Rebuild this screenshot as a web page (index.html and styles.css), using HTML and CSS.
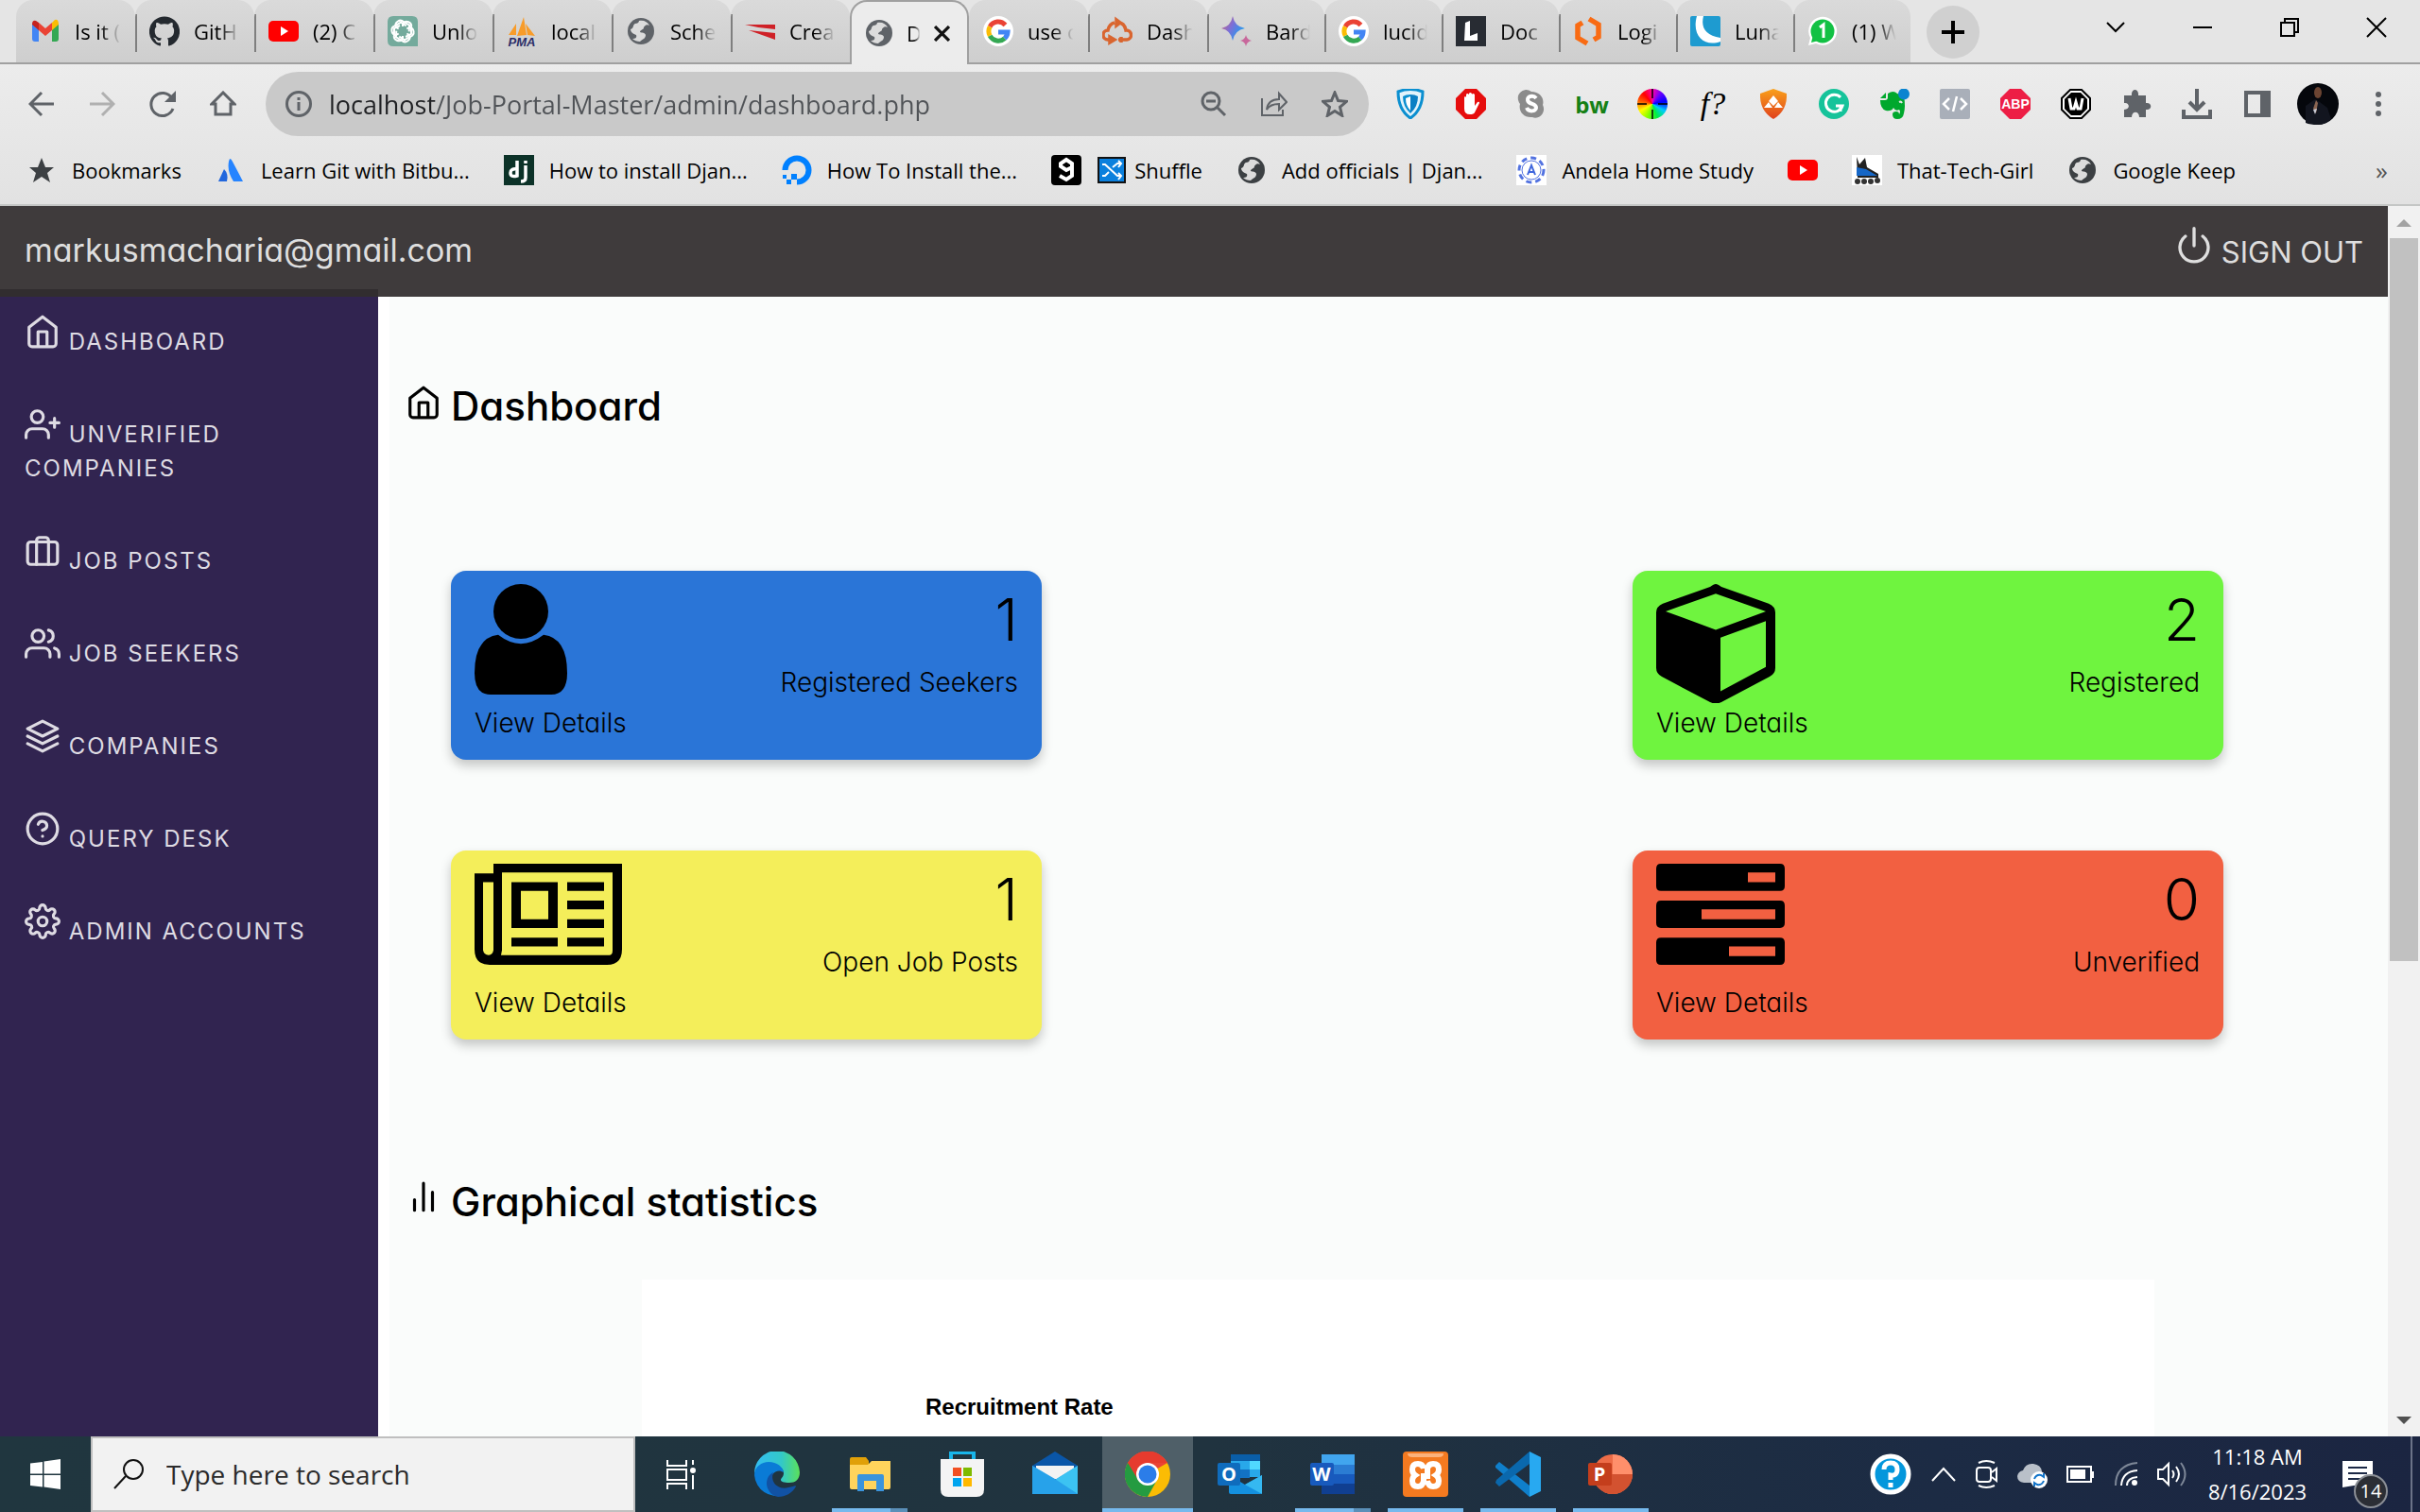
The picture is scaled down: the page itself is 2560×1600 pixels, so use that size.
FILE: index.html
```html
<!DOCTYPE html>
<html lang="en">
<head>
<meta charset="utf-8">
<title>Dashboard</title>
<link rel="stylesheet" href="styles.css">
</head>
<body>
<svg class="sprite" aria-hidden="true">
  <symbol id="globe" viewBox="0 0 32 32"><circle cx="16" cy="16" r="14" fill="currentColor"/><path d="M14 5c5-1 9 1 11 5-3-2-5 0-6 2 0 3-4 2-4 5 2 1 5 0 6 3 0 4-3 4-6 7-3 0-6-1-8-3 3 0 5-1 4-4-3-1-6-3-6-6 4-1 2-5 5-6 2 0 4-1 4-3z" fill="#dcdcdc"/></symbol>
  <symbol id="google" viewBox="0 0 32 32"><circle cx="16" cy="16" r="16" fill="#fff"/><g fill="none" stroke-width="5"><path d="M23.500 9.500A10 10 0 0 0 7.200 11.200" stroke="#ea4335"/><path d="M7.200 11.200a10 10 0 0 0 0 9.600" stroke="#fbbc04"/><path d="M7.200 20.800a10 10 0 0 0 15.600 2.800" stroke="#34a853"/><path d="M22.800 23.600a10 10 0 0 0 3.200-6.600H16" stroke="#4285f4"/></g></symbol>
  <symbol id="youtube" viewBox="0 0 32 32"><rect y="5" width="32" height="22" rx="5" fill="#f00"/><path d="M13 11v10l8-5z" fill="#fff"/></symbol>
  <symbol id="house" viewBox="0 0 24 24"><path d="M3 9l9-7 9 7v11a2 2 0 0 1-2 2H5a2 2 0 0 1-2-2zM9 22V12h6v10"/></symbol>
</svg>

<div class="browser">
  <div class="tabstrip">
    <div class="tabs">
      <button class="tab"><svg viewBox="0 0 32 32"><path d="M2 8v16q0 3 3 3h4V14z" fill="#4285f4"/><path d="M30 8v16q0 3-3 3h-4V14z" fill="#34a853"/><path d="M23 7l3-3q4-1 4 5l-7 6z" fill="#fbbc04"/><path d="M9 7L6 5Q2 4 2 9l7 6z" fill="#c5221f"/><path d="M9 7l7 6 7-6v8l-7 6-7-6z" fill="#ea4335"/></svg><span>Is it (</span></button>
      <button class="tab tab-line"><svg viewBox="0 0 24 24"><path fill="#24292f" d="M12 .3a12 12 0 0 0-3.800 23.400c.6.100.8-.3.800-.6v-2c-3.300.7-4-1.600-4-1.600-.6-1.400-1.400-1.800-1.400-1.800-1-.7.100-.7.100-.7 1.200 0 1.900 1.200 1.900 1.200 1 1.800 2.800 1.300 3.500 1 0-.8.400-1.300.7-1.600-2.700-.3-5.500-1.300-5.500-6 0-1.200.5-2.300 1.300-3.100-.2-.4-.6-1.600 0-3.200 0 0 1-.3 3.400 1.200a11.500 11.500 0 0 1 6 0c2.300-1.500 3.300-1.200 3.300-1.200.6 1.600.2 2.800 0 3.200.9.800 1.300 1.900 1.300 3.200 0 4.600-2.800 5.600-5.500 5.900.5.400.9 1 .9 2.200v3.300c0 .3.100.7.800.6A12 12 0 0 0 12 .3"/></svg><span>GitH</span></button>
      <button class="tab tab-line"><svg><use href="#youtube"/></svg><span>(2) C</span></button>
      <button class="tab tab-line"><svg viewBox="0 0 32 32"><path d="M6 0h20q6 0 6 6v26H6q-6 0-6-6V6q0-6 6-6z" fill="#74aa9c"/><g fill="none" stroke="#fff" stroke-width="2"><path id="knot" d="M16 11V8a5 5 0 0 1 9 4v7l-6 3"/><use href="#knot" transform="rotate(60 16 16)"/><use href="#knot" transform="rotate(120 16 16)"/><use href="#knot" transform="rotate(180 16 16)"/><use href="#knot" transform="rotate(240 16 16)"/><use href="#knot" transform="rotate(300 16 16)"/></g></svg><span>Unlo</span></button>
      <button class="tab tab-line"><svg viewBox="0 0 32 32"><path d="M2 20L10 8v12zM11 21L18 1l3 19zM22 20l-2-12 10 13z" fill="#f89c2a"/><text x="16" y="32" text-anchor="middle" class="pma">PMA</text></svg><span>local</span></button>
      <button class="tab tab-line"><svg class="grey"><use href="#globe"/></svg><span>Sche</span></button>
      <button class="tab tab-line"><svg viewBox="0 0 32 32"><path d="M0 9h32v5L14 12zM4 15l28 3v7z" fill="#cf2127"/></svg><span>Crea</span></button>
      <button class="tab tab-active"><svg class="grey"><use href="#globe"/></svg><span>D</span><svg class="tab-close" viewBox="0 0 16 16"><path d="M1 1l14 14M15 1L1 15" stroke="#111" stroke-width="3"/></svg></button>
      <button class="tab"><svg><use href="#google"/></svg><span>use c</span></button>
      <button class="tab tab-line"><svg viewBox="0 0 32 32" fill="none" stroke="#d9652f" stroke-width="3.500"><path d="M8 25H6a5 5 0 0 1 0-10c1-5 3-7 7-8M17 7c5 0 7 3 8 8a5 5 0 0 1 1 10h-9M8 22v6l5-3zM15 4v6l4-3zM20 22v6"/></svg><span>Dash</span></button>
      <button class="tab tab-narrow tab-line"><svg viewBox="0 0 32 32"><defs><linearGradient id="bard" x2="1" y2=".6"><stop stop-color="#d96570"/><stop offset=".5" stop-color="#7b6fd8"/><stop offset="1" stop-color="#1ba1f0"/></linearGradient></defs><path d="M12 0q2 11 13 13-11 2-13 13Q10 15 0 13 10 11 12 0z" fill="url(#bard)"/><path d="M26 20q1 5 6 6-5 1-6 6-1-5-6-6 5-1 6-6z" fill="#c8679b"/></svg><span>Bard</span></button>
      <button class="tab tab-narrow tab-line"><svg><use href="#google"/></svg><span>lucid</span></button>
      <button class="tab tab-narrow tab-line"><svg viewBox="0 0 32 32"><rect width="32" height="32" fill="#282c33"/><path d="M10 7l5-2v16l8-3v8H9z" fill="#fff"/></svg><span>Doc</span></button>
      <button class="tab tab-narrow tab-line"><svg viewBox="0 0 32 32" fill="none" stroke="#f96b13" stroke-width="5.500"><path d="M17 3l10 6v13l-5 3M15 29L5 23V10l5-3"/></svg><span>Logi</span></button>
      <button class="tab tab-narrow tab-line"><svg viewBox="0 0 32 32"><rect width="32" height="32" rx="2" fill="#1e9bd0"/><path d="M7 0h7c-3 12 2 20 18 23v4C16 33 1 22 7 0z" fill="#fff"/></svg><span>Luna</span></button>
      <button class="tab tab-narrow tab-line"><svg viewBox="0 0 32 32"><path d="M1 31l2-8A15 15 0 1 1 9 29z" fill="#fff"/><circle cx="16" cy="16" r="12.500" fill="#12c144"/><path d="M4 28l2-8 6 6z" fill="#12c144"/><path d="M13 12l4-3v14" fill="none" stroke="#fff" stroke-width="3"/></svg><span>(1) W</span></button>
    </div>
    <button class="new-tab" aria-label="New tab"><svg viewBox="0 0 24 24"><path d="M12 0v24M0 12h24" stroke="#000" stroke-width="4"/></svg></button>
    <div class="window-buttons">
      <button aria-label="Search tabs"><svg viewBox="0 0 20 20"><path d="M1 5l9 9 9-9"/></svg></button>
      <button aria-label="Minimize"><svg viewBox="0 0 20 20"><path d="M0 10h20"/></svg></button>
      <button aria-label="Restore"><svg viewBox="0 0 20 20"><path d="M1 5h14v14H1zM5 5V1h14v14h-4"/></svg></button>
      <button aria-label="Close"><svg viewBox="0 0 20 20"><path d="M0 0l20 20M20 0L0 20"/></svg></button>
    </div>
  </div>

  <div class="toolbar">
    <div class="cells line-icons">
      <button aria-label="Back"><svg viewBox="0 0 28 28"><path d="M27 14H3M14 2L2 14l12 12"/></svg></button>
      <button aria-label="Forward" class="dim"><svg viewBox="0 0 28 28"><path d="M1 14h24M14 2l12 12-12 12"/></svg></button>
      <button aria-label="Reload"><svg viewBox="0 0 28 28"><path d="M25 19a12 12 0 1 1-1-11"/><path d="M28 0v12H16z" fill="currentColor" stroke="none"/></svg></button>
      <button aria-label="Home"><svg viewBox="0 0 28 28"><path d="M2 14L14 2l12 12h-4v11H6V14z"/></svg></button>
    </div>
    <div class="address line-icons">
      <svg viewBox="0 0 28 28"><circle cx="14" cy="14" r="12.500"/><path d="M14 12v9M14 7v3"/></svg>
      <input class="url" type="text" aria-label="Address" value="localhost/Job-Portal-Master/admin/dashboard.php">
      <div class="cells">
        <button aria-label="Zoom"><svg viewBox="0 0 28 28"><circle cx="11" cy="11" r="9"/><path d="M18 18l8 8M6 11h10"/></svg></button>
        <button aria-label="Share"><svg class="thin" viewBox="0 0 28 28"><path d="M1 8v18h22v-6M6 20c1-8 6-11 13-11V3l8 9-8 8v-6c-6 0-10 1-13 6z"/></svg></button>
        <button aria-label="Bookmark this tab"><svg viewBox="0 0 28 28"><path d="M14 2l3.500 8.500 9 .8-7 6 2.200 9L14 21.500 6.300 26.300l2.200-9-7-6 9-.8z"/></svg></button>
      </div>
    </div>
    <div class="cells ext">
      <button aria-label="VPN"><svg viewBox="0 0 32 32"><path d="M3 3q13-5 26 0 0 19-13 28Q3 22 3 3z" fill="#e3f3fb" stroke="#0b8fd0" stroke-width="3"/><path d="M16 6q5 0 8 2 0 11-8 18z" fill="#0b7fc4"/><path d="M16 6q-5 0-8 2 0 11 8 18z" fill="#0b8fd0"/><path d="M16 8v15q-5-5-5-13z" fill="#fff"/></svg></button>
      <button aria-label="Ad blocker"><svg viewBox="0 0 32 32"><path d="M10 0h12l10 10v12L22 32H10L0 22V10z" fill="#e60d0d"/><path d="M9 17V9q1-2 2 0v6V6q1-2 3 0v8V5q1-2 3 0v9V6q1-2 3 0v12l3-4q2-1 2 1l-5 10q-1 2-5 2-6 0-6-6z" fill="#fff"/></svg></button>
      <button aria-label="Skype"><svg viewBox="0 0 32 32"><path d="M10 1a9 9 0 0 1 6 2c9 0 14 7 12 14 4 8-4 16-11 13C8 31 2 24 4 16-1 9 3 2 10 1z" fill="#8b8b8b"/><path d="M21 10c-3-4-10-2-9 2 1 5 9 3 9 8 0 4-8 5-10 0" fill="none" stroke="#fff" stroke-width="4"/></svg></button>
      <button aria-label="BuiltWith" class="bw">bw</button>
      <button aria-label="Color wheel"><svg viewBox="0 0 32 32" fill="none" stroke-width="14"><path d="M16 9v0A7 7 0 0 1 16 9" /><foreignObject width="32" height="32"><div class="wheel"></div></foreignObject><path d="M16 0v10M16 22v10M0 16h10M22 16h10" stroke="#000" stroke-width="1.500"/></svg></button>
      <button aria-label="What font" class="what">f?</button>
      <button aria-label="Shield"><svg viewBox="0 0 32 32"><defs><linearGradient id="or" y2="1" x2="0"><stop stop-color="#f9a11b"/><stop offset="1" stop-color="#e0401c"/></linearGradient></defs><path d="M16 0l14 5q1 18-14 27Q1 23 2 5z" fill="url(#or)"/><path d="M16 7l5 6-5 5-5-5zM6 20l5-6 4 6zM17 20l4-6 5 6z" fill="#fff"/></svg></button>
      <button aria-label="Grammarly"><svg viewBox="0 0 32 32"><circle cx="16" cy="16" r="16" fill="#15c39a"/><path d="M23 9a9 9 0 1 0 2 9h-7M23 24v-6" fill="none" stroke="#fff" stroke-width="3"/></svg></button>
      <button aria-label="Evernote"><svg viewBox="0 0 32 32"><path d="M1 12h5q3 0 3-3V5q6-4 10 0l7 3q2 10 0 18-1 6-7 6-5 0-5-5 0-3 4-3 3 0 3 3 2-3 0-5-4 2-6-2-2 4-8 3-6-2-6-11z" fill="#00a82d"/><path d="M1 10l6-6v6z" fill="#00a82d"/><path d="M21 14q2-1 3 1" stroke="#e7e7e7" stroke-width="2" fill="none"/><circle cx="26" cy="5.500" r="6" fill="#0a84d0"/></svg></button>
      <button aria-label="Code"><svg viewBox="0 0 32 32"><rect width="32" height="32" rx="2" fill="#a9afb9"/><path d="M10 10l-6 6 6 6M22 10l6 6-6 6M18 8l-4 16" fill="none" stroke="#fff" stroke-width="2.500"/></svg></button>
      <button aria-label="Adblock Plus"><svg viewBox="0 0 32 32"><path d="M10 0h12l10 10v12L22 32H10L0 22V10z" fill="#ed1e45"/><text x="16" y="21" text-anchor="middle" class="abp">ABP</text></svg></button>
      <button aria-label="Wappler"><svg viewBox="0 0 32 32"><path d="M10 1h12l9 9v12l-9 9H10l-9-9V10z" fill="#fff" stroke="#000" stroke-width="2"/><path d="M11 4h10l7 7v10l-7 7H11l-7-7V11z"/><path d="M9 10l2 11h3l2-7 2 7h3l2-11" fill="none" stroke="#fff" stroke-width="3"/></svg></button>
      <button aria-label="Extensions"><svg viewBox="0 0 32 32"><path d="M3 7h8c-1-8 8-8 7 0h8v8c7-1 7 8 0 7v8h-7c0-7-8-7-8 0H3v-8c7 0 6-8 0-7z" fill="#5f6368"/></svg></button>
      <button aria-label="Downloads"><svg viewBox="0 0 32 32"><path d="M16 0v21M8 14l8 8 8-8M2 22v8h28v-8" fill="none" stroke="#5f6368" stroke-width="4"/></svg></button>
      <button aria-label="Side panel"><svg viewBox="0 0 32 32"><path d="M4 4h24v24H4z" fill="none" stroke="#5f6368" stroke-width="4"/><path d="M19 4h9v24h-9z" fill="#5f6368"/></svg></button>
      <button aria-label="Profile"><svg class="avatar" viewBox="0 0 44 44"><circle cx="22" cy="22" r="22" fill="#05070c"/><path d="M9 42V24l10-7 5 3 8 6 4 12q-6 6-14 6-8 0-13-2z" fill="#12151f"/><ellipse cx="22" cy="10" rx="4" ry="6" fill="#6b4432"/><path d="M17 27l3-9 2 3-2 11z" fill="#8a6552"/><path d="M17 28l4-1-2 6z" fill="#c9ccd6"/></svg></button>
      <button aria-label="Menu"><svg viewBox="0 0 32 32" fill="#5f6368"><circle cx="16" cy="6" r="3"/><circle cx="16" cy="16" r="3"/><circle cx="16" cy="26" r="3"/></svg></button>
    </div>
  </div>

  <nav class="bookmarks">
    <a href="#"><svg viewBox="0 0 32 32"><path d="M16 3l4 10h9l-7 6 3 10-9-6-9 6 3-10-7-6h9z" fill="#3c4043"/></svg>Bookmarks</a>
    <a href="#"><svg viewBox="0 0 32 32"><path d="M3 28L9 15q5 5 3 13z" fill="#2267dd"/><path d="M14 7q1-6 4 0l11 21H19q-7-11-5-21z" fill="#2684ff"/></svg>Learn Git with Bitbu...</a>
    <a href="#"><svg viewBox="0 0 32 32"><rect width="32" height="32" fill="#0c3228"/><path d="M14 6v16q-7 2-7-3t7-4M23 11v13q0 4-5 4M23 6v3" fill="none" stroke="#fff" stroke-width="3.500"/></svg>How to install Djan...</a>
    <a href="#"><svg viewBox="0 0 32 32"><path d="M16 28.500A12.500 12.500 0 1 0 3.500 16" fill="none" stroke="#0080ff" stroke-width="6"/><path d="M10 20h6v6h-6zM5 26h5v5H5zM1 21h4v4H1z" fill="#0080ff"/></svg>How To Install the...</a>
    <a href="#" aria-label="9GAG"><svg viewBox="0 0 32 32"><rect width="32" height="32" rx="4"/><path d="M22 13l-6 3-6-4v-3l6-4 6 4v13l-6 4-7-4" fill="none" stroke="#fff" stroke-width="4"/></svg></a>
    <a href="#" class="tight"><svg viewBox="0 0 32 32"><path d="M2 3h28v26H2z" fill="#0b80dd" stroke="#111" stroke-width="2"/><path d="M6 10h3l13 12h3M6 22h3l4-4M17 13l5-4h3M23 6l3 3-3 4M23 19l3 3-3 4" fill="none" stroke="#fff" stroke-width="2"/></svg>Shuffle</a>
    <a href="#"><svg class="dark"><use href="#globe"/></svg>Add officials | Djan...</a>
    <a href="#"><svg viewBox="0 0 32 32"><rect width="32" height="32" fill="#fff"/><circle cx="16" cy="16" r="13" fill="none" stroke="#5272e0" stroke-width="3" stroke-dasharray="6 4"/><circle cx="16" cy="16" r="10" fill="none" stroke="#5272e0"/><path d="M12 21l4-10 4 10M13 18h6" fill="none" stroke="#3f66dd" stroke-width="2"/></svg>Andela Home Study</a>
    <a href="#" aria-label="YouTube"><svg><use href="#youtube"/></svg></a>
    <a href="#"><svg viewBox="0 0 32 32"><rect width="32" height="32" fill="#fff"/><path d="M5 2l3 8 6-7 2 10 12 7v4H6z" fill="#222"/><path d="M5 13l10 2 12 7H5z" fill="#1667c7"/><g fill="#333"><circle cx="6" cy="28" r="3"/><circle cx="13" cy="28" r="3"/><circle cx="20" cy="28" r="3"/><circle cx="27" cy="27" r="3"/></g></svg>That-Tech-Girl</a>
    <a href="#"><svg class="dark"><use href="#globe"/></svg>Google Keep</a>
    <button class="more" aria-label="More bookmarks">»</button>
  </nav>
</div>

<div class="viewport">
  <div class="page">
    <header class="site-header">
      <span>markusmacharia@gmail.com</span>
      <a href="#" class="signout"><svg viewBox="0 0 24 24"><path d="M12 1v11M6.500 6a9 9 0 1 0 11 0"/></svg>SIGN OUT</a>
    </header>
    <div class="columns">
      <nav class="sidebar">
        <ul>
          <li><a href="#"><svg><use href="#house"/></svg> DASHBOARD</a></li>
          <li><a href="#"><svg viewBox="0 0 24 24"><path d="M16 21v-2a4 4 0 0 0-4-4H5a4 4 0 0 0-4 4v2M20 8v6M23 11h-6"/><circle cx="8.500" cy="7" r="4"/></svg> UNVERIFIED COMPANIES</a></li>
          <li><a href="#"><svg viewBox="0 0 24 24"><rect x="2" y="6" width="20" height="15" rx="2"/><path d="M16 21V5a2 2 0 0 0-2-2h-4a2 2 0 0 0-2 2v16"/></svg> JOB POSTS</a></li>
          <li><a href="#"><svg viewBox="0 0 24 24"><path d="M17 21v-2a4 4 0 0 0-4-4H5a4 4 0 0 0-4 4v2M23 21v-2a4 4 0 0 0-3-3.900M16 3.100a4 4 0 0 1 0 7.800"/><circle cx="9" cy="7" r="4"/></svg> JOB SEEKERS</a></li>
          <li><a href="#"><svg viewBox="0 0 24 24"><path d="M12 2L2 7l10 5 10-5-10-5zM2 17l10 5 10-5M2 12l10 5 10-5"/></svg> COMPANIES</a></li>
          <li><a href="#"><svg viewBox="0 0 24 24"><circle cx="12" cy="12" r="10"/><path d="M9.100 9a3 3 0 0 1 5.800 1c0 2-3 3-3 3M12 17h.01"/></svg> QUERY DESK</a></li>
          <li><a href="#"><svg viewBox="0 0 24 24"><circle cx="12" cy="12" r="3"/><path d="M19.400 15a1.650 1.650 0 0 0 .33 1.820l.06.06a2 2 0 0 1 0 2.830 2 2 0 0 1-2.830 0l-.06-.06a1.650 1.650 0 0 0-1.820-.33 1.650 1.650 0 0 0-1 1.510V21a2 2 0 0 1-2 2 2 2 0 0 1-2-2v-.09A1.650 1.650 0 0 0 9 19.400a1.650 1.650 0 0 0-1.820.33l-.06.06a2 2 0 0 1-2.830 0 2 2 0 0 1 0-2.830l.06-.06a1.650 1.650 0 0 0 .33-1.820 1.650 1.650 0 0 0-1.510-1H3a2 2 0 0 1-2-2 2 2 0 0 1 2-2h.09A1.650 1.650 0 0 0 4.600 9a1.650 1.650 0 0 0-.33-1.820l-.06-.06a2 2 0 0 1 0-2.830 2 2 0 0 1 2.830 0l.06.06a1.650 1.650 0 0 0 1.820.33H9a1.650 1.650 0 0 0 1-1.510V3a2 2 0 0 1 2-2 2 2 0 0 1 2 2v.09a1.650 1.650 0 0 0 1 1.510 1.650 1.650 0 0 0 1.820-.33l.06-.06a2 2 0 0 1 2.830 0 2 2 0 0 1 0 2.830l-.06.06a1.650 1.650 0 0 0-.33 1.820V9a1.650 1.650 0 0 0 1.510 1H21a2 2 0 0 1 2 2 2 2 0 0 1-2 2h-.09a1.650 1.650 0 0 0-1.510 1z"/></svg> ADMIN ACCOUNTS</a></li>
        </ul>
      </nav>
      <main class="main">
        <h2><svg><use href="#house"/></svg>Dashboard</h2>
        <div class="cards">
          <article class="card blue">
            <div class="card-left"><svg viewBox="0 0 98 113" width="98" height="117" preserveAspectRatio="none"><ellipse cx="49" cy="28" rx="29" ry="28"/><path d="M25 52q24 18 48 0 25 3 25 39 0 22-17 22H17Q0 113 0 91q0-36 25-39z"/></svg><a href="#">View Details</a></div>
            <div class="card-right"><strong>1</strong><span>Registered Seekers</span></div>
          </article>
          <article class="card green">
            <div class="card-left"><svg viewBox="0 0 126 122" width="126" height="126" preserveAspectRatio="none"><path fill-rule="evenodd" d="M63 0q2 0 6 3l50 17q7 3 7 9v57q0 6-6 9l-51 26q-6 3-12 0L6 95q-6-3-6-9V29q0-6 7-9L57 3q4-3 6-3zM63 10L10 28l53 19 53-19zM68 110l48-25V38L68 55z"/></svg><a href="#">View Details</a></div>
            <div class="card-right"><strong>2</strong><span>Registered</span></div>
          </article>
          <article class="card yellow">
            <div class="card-left"><svg viewBox="0 0 156 104" width="156" height="107" preserveAspectRatio="none"><path fill-rule="evenodd" d="M20 0h136v88q0 16-16 16H16Q0 104 0 88V10h20zM29 9v80l-1 5h115q3 0 3-5V9zM9 19v70q1 5 6 5 4 0 5-5V19zM39 19h49v47H39zM49 28v29h29V28zM98 19h39v9H98zM98 38h39v9H98zM98 57h39v9H98zM98 76h39v9H98zM39 76h49v9H39z"/></svg><a href="#">View Details</a></div>
            <div class="card-right"><strong>1</strong><span>Open Job Posts</span></div>
          </article>
          <article class="card red">
            <div class="card-left"><svg viewBox="0 0 136 104" width="136" height="107" preserveAspectRatio="none"><path fill-rule="evenodd" d="M5 0h126q5 0 5 5v18q0 5-5 5H5q-5 0-5-5V5q0-5 5-5zM97 9v10h29V9zM5 38h126q5 0 5 5v18q0 5-5 5H5q-5 0-5-5V43q0-5 5-5zM48 47v10h78V47zM5 76h126q5 0 5 5v18q0 5-5 5H5q-5 0-5-5V81q0-5 5-5zM77 85v10h49V85z"/></svg><a href="#">View Details</a></div>
            <div class="card-right"><strong>0</strong><span>Unverified</span></div>
          </article>
        </div>
        <h2><svg viewBox="0 0 24 24"><path d="M18 20V8M12 20V2M6 20v-7"/></svg>Graphical statistics</h2>
        <section class="chart"><h3>Recruitment Rate</h3></section>
      </main>
    </div>
  </div>
  <div class="scrollbar">
    <svg viewBox="0 0 34 34"><path d="M9 22l8-8 8 8z" fill="#a3a3a3"/></svg>
    <div class="track"><div class="thumb"></div></div>
    <svg viewBox="0 0 34 34"><path d="M9 13l8 8 8-8z" fill="#505050"/></svg>
  </div>
</div>

<footer class="taskbar">
  <button class="start" aria-label="Start"><svg viewBox="0 0 32 32" fill="#fff"><path d="M0 4.500L13 3v12.500H0zM14.500 2.500L32 0v15.500H14.500zM0 17h13v12.500L0 28zM14.500 17H32v15l-17.500-2.500z"/></svg></button>
  <label class="search"><svg viewBox="0 0 32 32" fill="none" stroke="#111" stroke-width="2"><circle cx="21" cy="11" r="10"/><path d="M13 18L1 31"/></svg><input type="text" aria-label="Search" placeholder="Type here to search"></label>
  <div class="apps">
    <button aria-label="Task View" class="app wide"><svg class="small" viewBox="0 0 32 32" fill="none" stroke="#fff" stroke-width="2"><path d="M2 1v6h20V1M2 11h20v11H2zM2 32v-6h20v6M29 1v5M29 17v15"/><circle cx="29" cy="12" r="2" fill="#fff"/></svg></button>
    <button aria-label="Edge" class="app"><svg viewBox="0 0 48 48"><defs><linearGradient id="eg"><stop stop-color="#33bdf2"/><stop offset=".6" stop-color="#33c8c8"/><stop offset="1" stop-color="#5be05a"/></linearGradient></defs><path d="M0 24A24 24 0 0 1 48 22c0 8-5 11-11 11-6 0-9-1-9-3 0-2 3-3 3-7 0-5-5-9-11-9C9 12 1 18 0 24z" fill="url(#eg)"/><path d="M0 25c0-9 8-14 15-14 9 0 15 5 16 11-6-4-13 0-13 7 0 8 7 17 13 17A24 24 0 0 1 0 25z" fill="#0a7bd6"/><path d="M20 22c-4 12 7 19 16 16 5-1 8-3 8-1-4 7-11 11-19 11-8-1-12-9-12-14 0-6 3-10 7-12z" fill="#1152a4"/></svg></button>
    <button aria-label="File Explorer" class="app run stacked"><svg viewBox="0 0 48 48"><path d="M3 8q0-2 2-2h15l3 4v6H3z" fill="#e0a008"/><path d="M3 14h19l4-4h20v28q0 2-2 2H5q-2 0-2-2z" fill="#ffd45c"/><path d="M11 42V26q0-2 2-2h24q2 0 2 2v16h-8V31H18v11z" fill="#3b94dc"/></svg></button>
    <button aria-label="Store" class="app"><svg viewBox="0 0 48 48"><path d="M12 12V1h24v11" fill="none" stroke="#19b5ea" stroke-width="4"/><path d="M1 8h46v32q0 8-8 8H9q-8 0-8-8z" fill="#f4f4f4"/><path fill="#f25022" d="M14 17h9v9h-9z"/><path fill="#7fba00" d="M25 17h9v9h-9z"/><path fill="#00a4ef" d="M14 28h9v9h-9z"/><path fill="#ffb900" d="M25 28h9v9h-9z"/></svg></button>
    <button aria-label="Mail" class="app"><svg viewBox="0 0 48 48"><path d="M0 15L24 0l24 15v8H0z" fill="#0a56a8"/><path d="M4 15h40v14H4z" fill="#f3f3f3"/><path d="M0 15l24 15 24-15v30H0z" fill="#1f9be6"/><path d="M24 30l24-15v30z" fill="#3cc3f2"/><path d="M0 45h48L24 29 0 15z" fill="#27a2ea"/></svg></button>
    <button aria-label="Chrome" class="app run active"><svg viewBox="0 0 48 48"><circle cx="24" cy="24" r="24" fill="#fbbc04"/><path d="M24 24L3 12a24 24 0 0 1 42 0z" fill="#ea4335"/><path d="M24 24h-3L3 12a24 24 0 0 0 21 36l10-18z" fill="#249b41"/><path d="M24 12h21A24 24 0 0 0 3 12l11 18z" fill="#e63b2e"/><circle cx="24" cy="24" r="12" fill="#fff"/><circle cx="24" cy="24" r="9.500" fill="#2b7de9"/></svg></button>
    <button aria-label="Outlook" class="app"><svg viewBox="0 0 48 48"><path d="M14 3h31v24H14z" fill="#28a8ea"/><path d="M14 3h31v7H14z" fill="#0a5ea8"/><path d="M34 10h11v9H34z" fill="#50d9ff"/><path d="M24 19h10v9H24z" fill="#1272c4"/><path d="M12 25l17 10 18-10v18q0 2-2 2H14q-2 0-2-2z" fill="#1490df"/><path d="M29 35l18-10v20z" fill="#35b8f1"/><rect y="12" width="24" height="24" rx="2" fill="#0f6cbd"/><text x="12" y="31" text-anchor="middle" class="office">O</text></svg></button>
    <button aria-label="Word" class="app run stacked"><svg viewBox="0 0 48 48"><path d="M12 3h35v11H12z" fill="#41a5ee"/><path d="M12 14h35v10H12z" fill="#2b7cd3"/><path d="M12 24h35v10H12z" fill="#185abd"/><path d="M12 34h35v11H12z" fill="#103f91"/><rect y="12" width="25" height="24" rx="2" fill="#185abd"/><text x="12" y="31" text-anchor="middle" class="office">W</text></svg></button>
    <button aria-label="XAMPP" class="app run"><svg viewBox="0 0 48 48"><rect width="48" height="48" rx="4" fill="#f47a20"/><path d="M5 2h38q0 4-5 4H10Q5 6 5 2z" fill="#fbb27c"/><path d="M22 18q-1-5-6-5-6 0-6 6 0 4 3 6-3 2-3 6 0 6 6 6 5 0 6-6v-5h4v-8q1-5 6-5 6 0 6 6 0 4-3 6 3 2 3 6 0 6-6 6-5 0-6-6" fill="none" stroke="#fff" stroke-width="6"/></svg></button>
    <button aria-label="Visual Studio Code" class="app run"><svg viewBox="0 0 48 48"><path d="M0 15l4-4 32 25v12L0 17z" fill="#0f7fcb"/><path d="M0 33l4 4 32-24V0L1 30z" fill="#0a68ad"/><path d="M36 0l12 6v36l-12 6z" fill="#28a9f1"/></svg></button>
    <button aria-label="PowerPoint" class="app run"><svg viewBox="0 0 48 48"><circle cx="26" cy="24" r="21" fill="#ed6c47"/><path d="M26 3a21 21 0 0 1 21 21H26z" fill="#ff8f6b"/><path d="M47 24a21 21 0 0 1-42 0z" fill="#d35230"/><rect y="12" width="25" height="24" rx="2" fill="#c43e1c"/><text x="12" y="31" text-anchor="middle" class="office">P</text></svg></button>
  </div>
  <div class="tray">
    <svg viewBox="0 0 44 44" width="44" height="44"><circle cx="22" cy="22" r="19" fill="#0497dc" stroke="#fff" stroke-width="5"/><path d="M15 17q0-7 7-7t7 7-7 6v5M22 31v5" fill="none" stroke="#fff" stroke-width="5"/></svg>
    <svg viewBox="0 0 28 32" width="28" height="32"><path d="M2 23L14 10l12 13"/></svg>
    <svg viewBox="0 0 24 32" width="24" height="32"><rect x="1" y="9" width="15" height="15" rx="3"/><path d="M17 14l5-4v13l-5-4M3 4q8-4 17 0M3 28q8 4 17 0"/></svg>
    <svg viewBox="0 0 32 32" width="32" height="32"><path d="M7 25q-7-1-7-7 1-5 6-6 3-8 11-7 8 1 9 8v12z" fill="#b9c0c9" stroke="none"/><circle cx="23" cy="22" r="9" fill="#fff" stroke="none"/><path d="M18 21q2-5 7-4l3 2v-4M28 23q-2 5-7 4l-3-2v4" stroke="#1173c9"/></svg>
    <svg viewBox="0 0 30 32" width="30" height="32"><path d="M1 8h25v16H1zM28 13v7"/><path d="M4 11h16v10H4z" fill="#fff" stroke="none"/></svg>
    <svg viewBox="0 0 26 32" width="26" height="32"><circle cx="22" cy="25" r="3" fill="#fff" stroke="none"/><path d="M14 28q0-8 11-9M8 28q1-15 17-16"/><path d="M2 28Q2 6 25 4" stroke="#7d8797"/></svg>
    <svg viewBox="0 0 32 32" width="32" height="32"><path d="M1 11h5l6-6v22l-6-6H1zM16 12q3 4 0 8M20 8q6 8 0 16"/><path d="M25 4q9 12 0 24" stroke="#7d8797"/></svg>
    <div class="clock"><span>11:18 AM</span><span>8/16/2023</span></div>
    <button class="notify" aria-label="Notifications"><svg viewBox="0 0 32 28"><path d="M0 0h32v26H12L0 28z" fill="#fff" stroke="none"/><path d="M6 7h20M6 13h20M6 19h14" stroke="#1c2946"/></svg><span class="badge">14</span></button>
  </div>
  <button class="show-desktop" aria-label="Show desktop"></button>
</footer>
</body>
</html>
```
FILE: styles.css
```css
* { box-sizing: border-box; }
body {
  margin: 0;
  height: 100vh;
  display: flex;
  flex-direction: column;
  overflow: hidden;
  font-family: "Open Sans", "Noto Sans", sans-serif;
  color: #000;
}
button { border: 0; padding: 0; background: none; font: inherit; color: inherit; }
a { color: inherit; text-decoration: none; }
svg { flex: none; }
.sprite { width: 0; height: 0; position: absolute; }

/* Browser chrome */
.browser { background: linear-gradient(#ececec 68px, #e2e2e2); border-bottom: 2px solid #c4c6c5; }
.tabstrip { display: flex; align-items: flex-start; height: 68px; padding-left: 17px; background: #e5e5e5; border-bottom: 2px solid #a0a0a0; }
.tabs { display: flex; align-self: stretch; }
.tab {
  display: flex; align-items: center; gap: 15px; width: 126px; height: 66px; padding: 0 10px 0 15px;
  background: linear-gradient(#dadada, #cecece); border-radius: 18px 18px 0 0; font-size: 22px; text-align: left;
}
.tab-narrow { width: 124px; }
.tab svg { width: 32px; height: 32px; }
.tab span { flex: 1; white-space: nowrap; -webkit-mask-image: linear-gradient(90deg, #000 50%, transparent 90%); }
.tab-line { background-image: linear-gradient(#7f7f7f, #7f7f7f), linear-gradient(#dadada, #cecece); background-size: 2px 40px, auto; background-position: 0 15px, 0 0; background-repeat: no-repeat; }
.tab.tab-active { height: 68px; padding-left: 13px; gap: 13px; background: #ececec; border: 2px solid #a0a0a0; border-bottom: 0; }
.tab .tab-close { width: 17px; height: 17px; margin-right: 10px; }
.grey { color: #5f6368; }
.dark { color: #3c4043; }
.pma { font: italic bold 13px "Liberation Sans", sans-serif; fill: #2b2d67; }
.new-tab { width: 56px; height: 56px; margin: 6px 0 0 17px; border-radius: 50%; background: #d0d0d0; display: grid; place-items: center; }
.new-tab svg { width: 24px; height: 24px; }
.window-buttons { display: flex; margin-left: auto; }
.window-buttons button { width: 92px; height: 58px; display: grid; place-items: center; }
.window-buttons svg { width: 20px; height: 20px; fill: none; stroke: #000; stroke-width: 2; overflow: visible; }

.toolbar { display: flex; align-items: center; padding: 8px 12px; }
.cells { display: flex; }
.cells button { width: 64px; height: 64px; display: grid; place-items: center; }
.line-icons svg { width: 28px; height: 28px; fill: none; stroke: currentColor; stroke-width: 3; }
.line-icons .thin { stroke-width: 2; }
.line-icons { color: #5f6368; }
.line-icons .dim { color: #b0b0b0; }
.address { flex: 1; height: 68px; display: flex; align-items: center; margin: 0 12px 0 13px; padding: 0 4px 0 21px; background: #c9c9c9; border-radius: 34px; }
.url {
  flex: 1; min-width: 0; margin-left: 18px; padding: 0; border: 0; font: 27px "Open Sans", sans-serif;
  color: #505357; -webkit-text-fill-color: transparent;
  background: linear-gradient(90deg, #202124 112px, #505357 112px) text;
}
.ext svg, .wheel { width: 32px; height: 32px; }
.ext .avatar { width: 44px; height: 44px; }
.wheel { border-radius: 50%; background: conic-gradient(#f0a, #60f, #00f, #0cf, #0e4, #8f0, #ff0, #f60, #f00, #f0a); }
.bw { font: bold 24px "Open Sans", sans-serif; color: #158015; }
.what { font: italic 34px "Liberation Serif", serif; }
.abp { font: bold 14px "Liberation Sans", sans-serif; fill: #fff; }

.bookmarks { display: flex; align-items: center; height: 64px; padding: 0 34px 8px 28px; gap: 36px; font-size: 22px; white-space: nowrap; }
.bookmarks a { display: flex; align-items: center; gap: 16px; }
.bookmarks svg { width: 32px; height: 32px; }
.bookmarks .tight { gap: 8px; margin-left: -20px; }
.more { margin-left: auto; font-size: 26px; color: #555; }

/* Web page */
.viewport { flex: 1; min-height: 0; display: flex; }
.page { flex: 1; display: flex; flex-direction: column; overflow: hidden; font-family: Inter, sans-serif; font-feature-settings: "cv11"; }
.site-header { display: flex; align-items: center; justify-content: space-between; height: 96px; flex: none; padding: 0 26px 4px; background: #3f3b3c; color: #dedede; font-size: 34px; }
.signout { display: flex; align-items: center; gap: 9px; padding-top: 4px; font-size: 31px; }
.signout svg { width: 40px; height: 40px; margin-bottom: 12px; fill: none; stroke: currentColor; stroke-width: 2; stroke-linecap: round; }
.columns { flex: 1; min-height: 0; display: flex; }
.sidebar { width: 400px; flex: none; background: #312450; color: #dedbe3; box-shadow: 0 -8px 0 #312d2f; }
.sidebar ul { list-style: none; margin: 0; padding: 0; }
.sidebar li { padding: 18px 26px 32px; font-size: 24px; line-height: 36px; letter-spacing: 2px; }
.sidebar svg, h2 svg { width: 38px; height: 38px; fill: none; stroke: currentColor; stroke-width: 2; stroke-linecap: round; stroke-linejoin: round; }
.main { flex: 1; min-width: 0; margin-left: 12px; background: #fafcfb; overflow: hidden; }
h2 { display: flex; align-items: center; gap: 10px; margin: 86px 0 0 17px; font-size: 42px; line-height: 60px; font-weight: 500; }
h2 svg { margin-bottom: 8px; }
.cards { display: grid; grid-template-columns: repeat(3, 1fr); row-gap: 96px; margin: 144px 174px 142px 65px; }
.cards + h2 { margin-top: 0; }
.card { display: flex; justify-content: space-between; height: 200px; padding: 14px 25px; border-radius: 16px; box-shadow: 0 6px 12px rgba(0, 0, 0, .22); font-size: 28px; line-height: 40px; font-weight: 300; }
.card:nth-child(even) { grid-column: 3; }
.card-left { display: flex; flex-direction: column; justify-content: space-between; }
.card-left a { margin-bottom: 5px; }
.card-left svg { margin-bottom: -10px; }
.card-right { display: flex; flex-direction: column; align-items: flex-end; }
.card-right strong { font-size: 62px; line-height: 76px; font-weight: 300; }
.card-right span { padding-top: 8px; }
.blue { background: #2a75d7; }
.green { background: #6ff43f; }
.yellow { background: #f4ee5a; }
.red { background: #f26041; }
.chart { height: 400px; margin: 52px 247px 0 267px; padding: 120px 300px; background: #fff; }
.chart h3 { margin: 0; font: bold 24px/30px "Liberation Sans", Arial, sans-serif; }

.scrollbar { width: 34px; display: flex; flex-direction: column; background: #f1f1f1; }
.scrollbar svg { width: 34px; height: 34px; }
.track { flex: 1; padding: 0 2px; }
.thumb { height: 62%; background: #c1c1c1; }

/* Taskbar */
.taskbar { display: flex; height: 80px; background: linear-gradient(90deg, #20363f, #20333f 50%, #1c2b44 80%, #1b2541); color: #fff; }
.start { width: 96px; display: grid; place-items: center; }
.start svg { width: 32px; height: 32px; }
.search { width: 576px; display: flex; align-items: center; gap: 24px; padding: 0 22px; background: #f2f2f2; border: 2px solid #bfbfbf; }
.search svg { width: 32px; height: 32px; }
.search input { flex: 1; min-width: 0; padding: 0; border: 0; background: none; font: 28px "Open Sans", sans-serif; }
.search input::placeholder { color: #2b2b2b; }
.apps { display: flex; gap: 2px; }
.app { width: 96px; display: grid; place-items: center; }
.app svg { width: 48px; height: 48px; }
.app .small { width: 32px; height: 32px; }
.app.wide { width: 100px; padding-right: 4px; }
.run { background: linear-gradient(#76b9ed, #76b9ed) center bottom / 80px 4px no-repeat; }
.stacked { background: linear-gradient(90deg, #76b9ed 62px, #5a8fb8 62px) center bottom / 80px 4px no-repeat; }
.run.active { background-color: #4f5f68; background-size: 96px 4px; }
.office { font: bold 20px "Open Sans", sans-serif; fill: #fff; }
.tray { display: flex; align-items: center; gap: 20px; margin-left: auto; padding-right: 40px; font-size: 22px; }
.tray svg { fill: none; stroke: #fff; stroke-width: 2; }
.clock { display: flex; flex-direction: column; align-items: center; line-height: 37px; width: 108px; }
.notify { position: relative; width: 32px; height: 28px; margin-left: 16px; }
.notify svg { width: 32px; height: 28px; display: block; }
.badge { position: absolute; left: 12px; top: 14px; width: 36px; height: 36px; border: 2px solid #8b8f96; border-radius: 50%; background: #2b2e35; font-size: 20px; line-height: 31px; }
.show-desktop { width: 10px; border-left: 2px solid #6b7388; }
```
